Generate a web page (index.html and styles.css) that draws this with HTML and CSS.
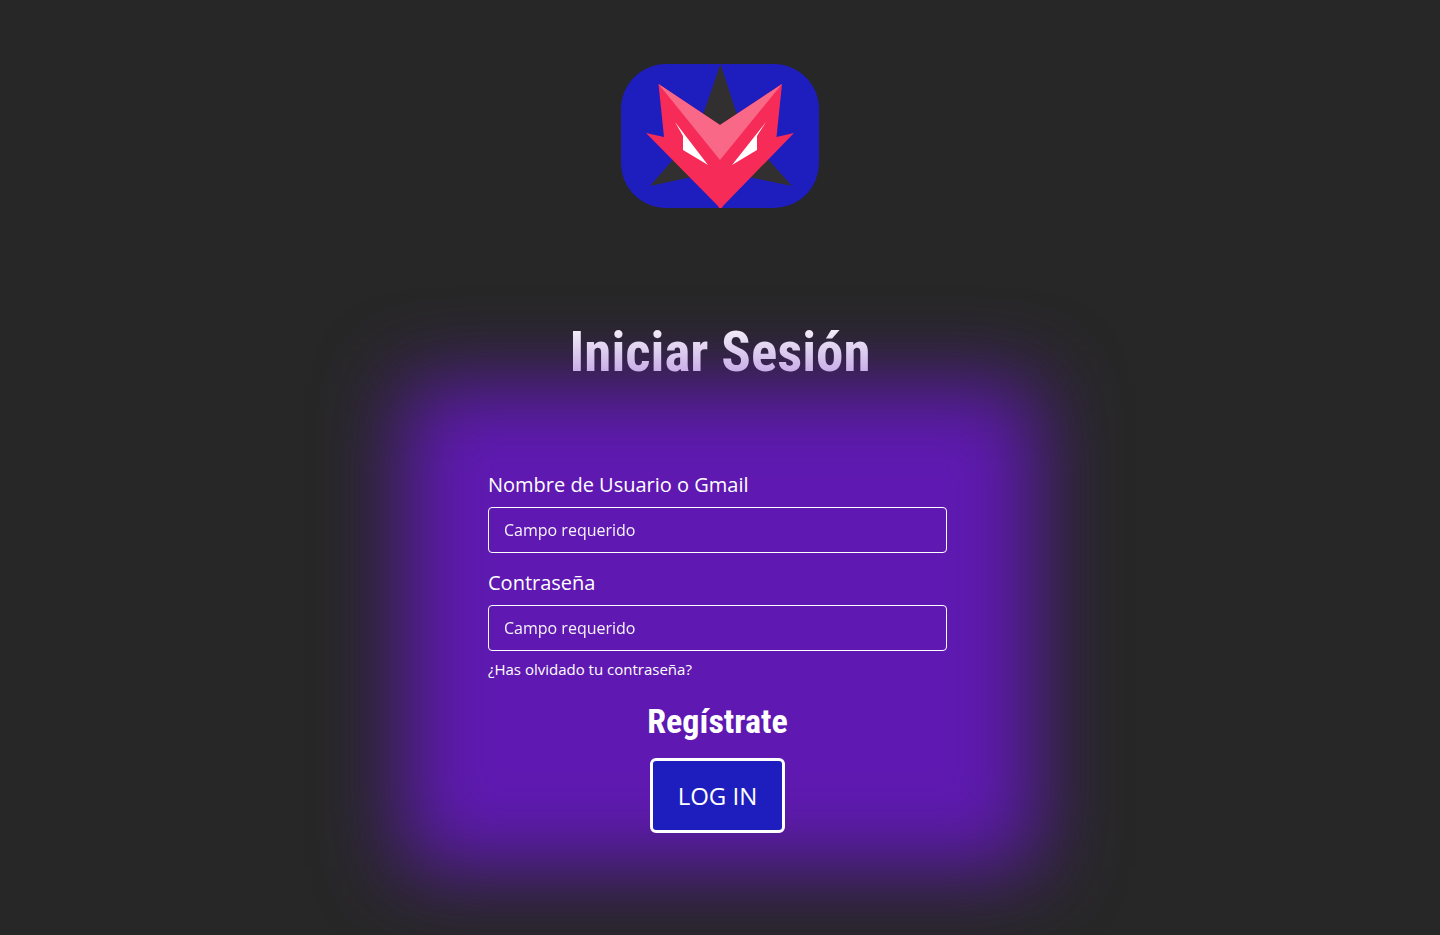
FILE: index.html
```html
<!DOCTYPE html>
<html lang="es">
<head>
<meta charset="utf-8">
<meta name="viewport" content="width=device-width, initial-scale=1">
<title>Iniciar Sesión</title>
<link rel="stylesheet" href="styles.css">
</head>
<body>
<header class="brand">
  <svg class="logo" viewBox="0 0 198 144" role="img" aria-label="Logo">
    <rect width="198" height="144" rx="45" fill="#1e1ebe"/>
    <path d="M99.500 0L121 66L171 122L99 107L29 122L76 68Z" fill="#312f30"/>
    <path d="M37.500 20L99 61L161 20L155.500 73L173 69L102 142Q99.500 147 97 142L25 69L43 73Z" fill="#f72b57"/>
    <path d="M37.500 20L99 61L161 20L99 96Z" fill="#f96886"/>
    <path d="M54 58L87 101L62 86V72Z" fill="#fff"/>
    <path d="M145 58L111 101L136 86V72Z" fill="#fff"/>
  </svg>
</header>
<main class="login">
  <h1 class="title">Iniciar Sesión</h1>
  <form class="card">
    <div class="field">
      <label class="label" for="user">Nombre de Usuario o Gmail</label>
      <input class="input" id="user" type="text" placeholder="Campo requerido" required>
    </div>
    <div class="field">
      <label class="label" for="pass">Contraseña</label>
      <input class="input" id="pass" type="password" placeholder="Campo requerido" required>
    </div>
    <a class="forgot" href="#">¿Has olvidado tu contraseña?</a>
    <a class="register" href="#">Regístrate</a>
    <button class="submit" type="submit">LOG IN</button>
  </form>
</main>
</body>
</html>
```
FILE: styles.css
```css
* {
  box-sizing: border-box;
}

body {
  margin: 0;
  min-height: 100vh;
  overflow-x: hidden;
  background: #272727;
  color: #fff;
  font-family: "Open Sans", "Noto Sans", sans-serif;
}

.brand {
  display: flex;
  justify-content: center;
  padding-top: 64px;
}

.logo {
  width: 198px;
  height: 144px;
}

.login {
  display: flex;
  flex-direction: column;
  align-items: center;
  padding-top: 112px;
}

.title,
.register {
  font-family: "Roboto Condensed", "Liberation Sans Narrow", sans-serif;
  font-weight: 700;
}

.title {
  position: relative;
  z-index: 1;
  margin: 0;
  font-size: 55px;
  line-height: 64px;
  background: linear-gradient(#fff 0%, #f0e8f7 20%, #c3a5e5 90%);
  background-clip: text;
  color: transparent;
}

.card {
  position: relative;
  isolation: isolate;
  display: flex;
  flex-direction: column;
  width: 100%;
  max-width: 634px;
  padding: 87px 90px 36px 85px;
}

.card::before {
  content: "";
  position: absolute;
  inset: 0;
  z-index: -1;
  background: #5f19b2;
  filter: blur(41px);
}

.field {
  display: flex;
  flex-direction: column;
  margin-bottom: 16px;
}

.label {
  margin-bottom: 8px;
  font-size: 20px;
  line-height: 28px;
}

.input {
  width: 100%;
  height: 46px;
  padding: 0 15px;
  border: 1px solid #fff;
  border-radius: 4px;
  background: transparent;
  color: #fff;
  font-family: inherit;
  font-size: 16px;
}

.input::placeholder {
  color: #fff;
  opacity: 0.95;
}

.forgot {
  align-self: flex-start;
  margin-top: -8px;
  color: #fff;
  font-size: 15px;
  line-height: 20px;
  text-decoration: none;
}

.register {
  align-self: center;
  margin-top: 22px;
  color: #fff;
  font-size: 34px;
  line-height: 40px;
  text-decoration: none;
}

.submit {
  align-self: center;
  margin-top: 17px;
  width: 135px;
  height: 75px;
  border: 3px solid #fff;
  border-radius: 6px;
  background: #1e1ebe;
  color: #fff;
  font-family: inherit;
  font-size: 24px;
}
```
